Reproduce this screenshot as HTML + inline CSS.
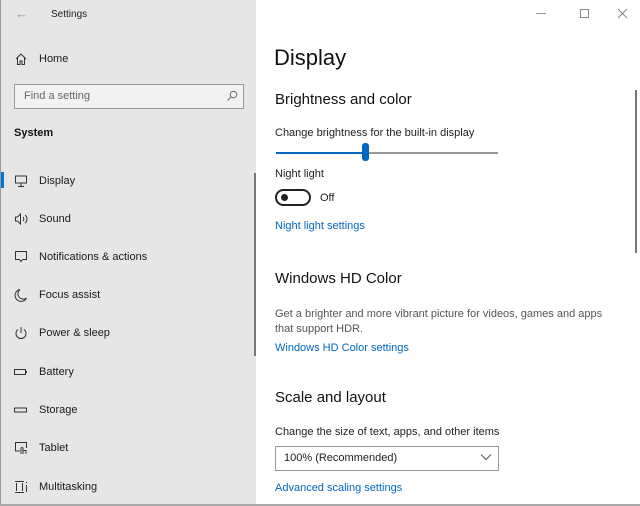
<!DOCTYPE html>
<html><head><meta charset="utf-8"><style>
*{margin:0;padding:0;box-sizing:border-box}
body{width:640px;height:506px;overflow:hidden;font-family:"Liberation Sans",sans-serif;background:#fff;position:relative;color:#000}
.l{position:absolute;left:0;top:0;width:256px;height:506px;background:#e6e6e6;border-left:1px solid #999}
.t{position:absolute;white-space:nowrap}
.nav{font-size:11px;color:#1a1a1a}
.ic{position:absolute;left:13px;width:14px;height:14px}
.link{color:#0067c0;font-size:11px}
.h2{font-size:15px;color:#111}
.p{font-size:11px;color:#222}
</style></head><body>
<div class="l">
<div class="t" style="left:14px;top:6px;font-size:13px;color:#999">←</div>
<div class="t" style="left:50px;top:9px;font-size:10px;color:#222">Settings</div>
<svg class="ic" style="top:52px" viewBox="0 0 14 14" fill="none" stroke="#333" stroke-width="1"><path d="M2 7L7 2L12 7M3.5 6V12.5H6V9H8V12.5H10.5V6"/></svg>
<div class="t nav" style="left:38px;top:53px">Home</div>
<div style="position:absolute;left:13px;top:84px;width:230px;height:25px;border:1.5px solid #999;background:#f2f2f2"></div>
<div class="t" style="left:23px;top:90px;font-size:11px;color:#666">Find a setting</div>
<svg style="position:absolute;left:225px;top:90px" width="12" height="12" viewBox="0 0 12 12" fill="none" stroke="#666"><circle cx="7.5" cy="4.5" r="3.3"/><path d="M5 7L1.5 10.5"/></svg>
<div class="t" style="left:13px;top:127px;font-size:11px;font-weight:bold;color:#111">System</div>
<div style="position:absolute;left:0;top:172px;width:3px;height:16px;background:#0078d7"></div>
<svg class="ic" style="top:174px" viewBox="0 0 14 14" fill="none" stroke="#333"><rect x="1.5" y="2" width="11" height="7"/><path d="M7 9v3M4 12.5h6"/></svg>
<div class="t nav" style="left:38px;top:175px">Display</div>
<svg class="ic" style="top:212px" viewBox="0 0 14 14" fill="none" stroke="#333"><path d="M1.5 5h2l3-3v10l-3-3h-2z M9 5a3 3 0 0 1 0 4M11 3a5 5 0 0 1 0 8"/></svg>
<div class="t nav" style="left:38px;top:213px">Sound</div>
<svg class="ic" style="top:250px" viewBox="0 0 14 14" fill="none" stroke="#333"><path d="M1.5 1.5h11v8h-4l-1.5 2-1.5-2h-4z"/></svg>
<div class="t nav" style="left:38px;top:251px">Notifications &amp; actions</div>
<svg class="ic" style="top:288px" viewBox="0 0 14 14" fill="none" stroke="#333"><path d="M6 1.5a6 6 0 1 0 6.5 8.5A5 5 0 0 1 6 1.5z"/></svg>
<div class="t nav" style="left:38px;top:289px">Focus assist</div>
<svg class="ic" style="top:326px" viewBox="0 0 14 14" fill="none" stroke="#333"><path d="M4 3.5a5 5 0 1 0 6 0M7 1v6"/></svg>
<div class="t nav" style="left:38px;top:327px">Power &amp; sleep</div>
<svg class="ic" style="top:365px" viewBox="0 0 14 14" fill="none" stroke="#333"><rect x="0.5" y="4.5" width="11" height="5"/><path d="M12.5 6v2"/></svg>
<div class="t nav" style="left:38px;top:366px">Battery</div>
<svg class="ic" style="top:403px" viewBox="0 0 14 14" fill="none" stroke="#333"><rect x="0.5" y="5" width="12" height="4"/></svg>
<div class="t nav" style="left:38px;top:404px">Storage</div>
<svg class="ic" style="top:441px" viewBox="0 0 14 14" fill="none" stroke="#333"><path d="M6 10H1.5V1.5h11V7M7 13V7.5a1 1 0 0 1 2 0V13M9 9.5h3V13"/></svg>
<div class="t nav" style="left:38px;top:442px">Tablet</div>
<svg class="ic" style="top:480px" viewBox="0 0 14 14" fill="none" stroke="#333"><path d="M1 1.5h9M1 12.5h9M2.5 3v8M8.5 3v8M12.5 2v1M12.5 5v7"/></svg>
<div class="t nav" style="left:38px;top:481px">Multitasking</div>
<div style="position:absolute;left:253px;top:173px;width:2px;height:183px;background:#777"></div>
</div>
<div style="position:absolute;left:536px;top:13px;width:10px;height:1px;background:#999"></div>
<div style="position:absolute;left:580px;top:9px;width:9px;height:9px;border:1px solid #888"></div>
<svg style="position:absolute;left:617px;top:8px" width="11" height="11" stroke="#888"><path d="M1 1L10 10M10 1L1 10"/></svg>
<div style="position:absolute;left:635px;top:90px;width:2px;height:163px;background:#777"></div>
<div style="position:absolute;left:0;top:504px;width:640px;height:2px;background:#aaa"></div>
<div class="t" style="left:274px;top:45px;font-size:22px;color:#111">Display</div>
<div class="t h2" style="left:275px;top:91px">Brightness and color</div>
<div class="t p" style="left:275px;top:127px">Change brightness for the built-in display</div>
<div style="position:absolute;left:276px;top:152px;width:90px;height:2px;background:#0067c0"></div>
<div style="position:absolute;left:366px;top:152px;width:132px;height:2px;background:#999"></div>
<div style="position:absolute;left:362px;top:143px;width:7px;height:18px;border-radius:3px;background:#0067c0"></div>
<div class="t p" style="left:275px;top:168px">Night light</div>
<div style="position:absolute;left:275px;top:189px;width:36px;height:17px;border:2px solid #222;border-radius:9px"></div>
<div style="position:absolute;left:281px;top:194px;width:7px;height:7px;border-radius:50%;background:#222"></div>
<div class="t p" style="left:320px;top:192px">Off</div>
<div class="t link" style="left:275px;top:220px">Night light settings</div>
<div class="t h2" style="left:275px;top:270px">Windows HD Color</div>
<div class="t" style="left:275px;top:307px;font-size:11px;color:#555;line-height:15px">Get a brighter and more vibrant picture for videos, games and apps<br>that support HDR.</div>
<div class="t link" style="left:275px;top:342px">Windows HD Color settings</div>
<div class="t h2" style="left:275px;top:389px">Scale and layout</div>
<div class="t p" style="left:275px;top:426px">Change the size of text, apps, and other items</div>
<div style="position:absolute;left:275px;top:446px;width:224px;height:25px;border:1.5px solid #999"></div>
<div class="t p" style="left:284px;top:452px">100% (Recommended)</div>
<svg style="position:absolute;left:480px;top:453px" width="12" height="8" fill="none" stroke="#555"><path d="M1 1.5l5 5 5-5"/></svg>
<div class="t link" style="left:275px;top:482px">Advanced scaling settings</div>
</body></html>
